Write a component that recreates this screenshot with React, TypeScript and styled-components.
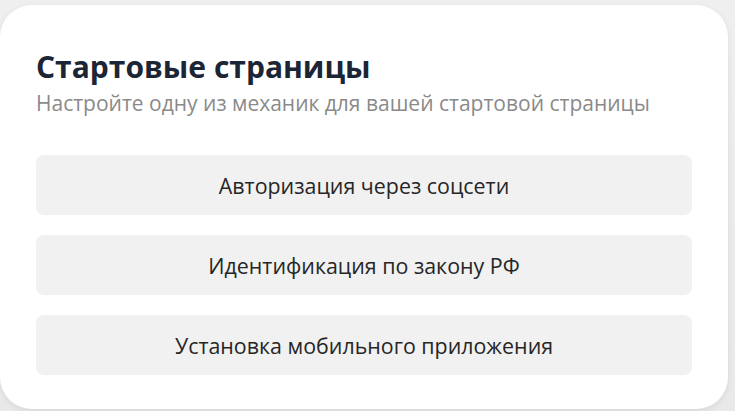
import styled, { createGlobalStyle } from 'styled-components'

const GlobalStyle = createGlobalStyle`
  html, body {
    margin: 0;
    padding: 0;
    background: #ececec;
    font-family: 'Open Sans', 'Noto Sans', sans-serif;
  }
`

const options = [
  'Авторизация через соцсети',
  'Идентификация по закону РФ',
  'Установка мобильного приложения',
]

function App() {
  return (
    <>
      <GlobalStyle />
      <Page>
        <Card>
          <Header>
            <Title>Стартовые страницы</Title>
            <Subtitle>Настройте одну из механик для вашей стартовой страницы</Subtitle>
          </Header>
          <OptionList>
            {options.map((label) => (
              <Option key={label} type="button">
                {label}
              </Option>
            ))}
          </OptionList>
        </Card>
      </Page>
    </>
  )
}

const Page = styled.div`
  width: 735px;
  height: 411px;
  padding-top: 5px;
  box-sizing: border-box;
  overflow: hidden;
  background: linear-gradient(180deg, #efefef 0%, #e9e9e9 100%);
`

const Card = styled.section`
  width: 728px;
  height: 404px;
  box-sizing: border-box;
  padding: 44px 36px 0;
  background: #fff;
  border-radius: 32px;
  box-shadow: 0 2px 6px rgba(0, 0, 0, 0.08);
`

const Header = styled.header`
  margin-bottom: 38px;
`

const Title = styled.h2`
  margin: 0 0 4px;
  font-size: 30px;
  line-height: 36px;
  font-weight: 700;
  color: #1c2535;
`

const Subtitle = styled.p`
  margin: 0;
  font-size: 21px;
  line-height: 28px;
  color: #8a8a8a;
`

const OptionList = styled.div`
  display: flex;
  flex-direction: column;
  gap: 20px;
`

const Option = styled.button`
  height: 60px;
  width: 100%;
  border: none;
  border-radius: 8px;
  background: #f1f1f1;
  font-family: inherit;
  font-size: 21.4px;
  color: #262626;
  cursor: pointer;
`

export default App
